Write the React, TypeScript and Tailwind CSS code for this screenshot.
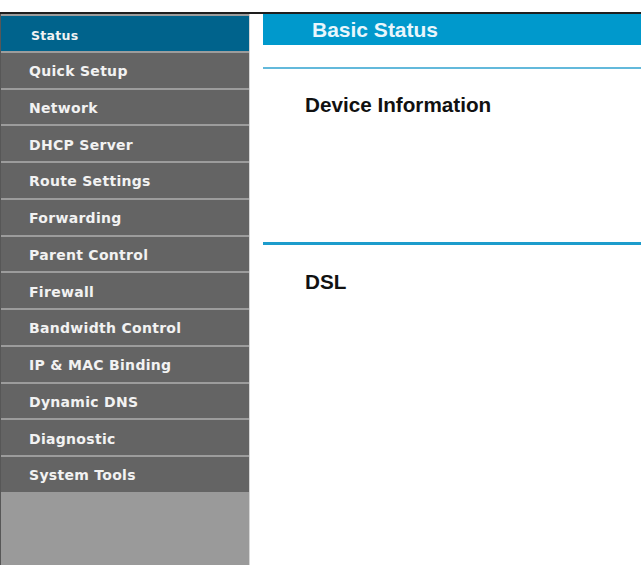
import React from "react";

const menuItems = [
  "Status",
  "Quick Setup",
  "Network",
  "DHCP Server",
  "Route Settings",
  "Forwarding",
  "Parent Control",
  "Firewall",
  "Bandwidth Control",
  "IP & MAC Binding",
  "Dynamic DNS",
  "Diagnostic",
  "System Tools",
];

export default function App() {
  const active = "Status";

  return (
    <div className="flex h-[565px] w-full flex-col overflow-hidden bg-white font-['Liberation_Sans',Arial,sans-serif]">
      {/* top edge */}
      <div className="h-[12px] bg-white" />
      <div className="h-[2px] bg-[#1e1e1e]" />

      <div className="flex min-h-0 flex-1">
        {/* side menu */}
        <nav className="flex w-[250px] flex-col border-l border-r border-l-[#575757] border-r-[#d6d6d6]">
          {menuItems.map((item) => (
            <div
              key={item}
              className={`flex h-[36.75px] items-center border-t-[2px] border-[#9c9c9c] pt-[3px] font-['DejaVu_Sans',Verdana,sans-serif] font-bold tracking-[0.3px] text-[#f2f2f2] ${
                item === active
                  ? "bg-[#00638c] pl-[30px] pt-[5px] text-[12.5px]"
                  : "bg-[#646464] pl-[28px] text-[14px]"
              }`}
            >
              {item}
            </div>
          ))}
          <div className="flex-1 bg-[#9a9a9a]" />
        </nav>

        {/* main content */}
        <main className="flex flex-1 flex-col pl-[13px]">
          <div className="flex h-[31px] items-center bg-[#0099cc] pl-[49px] text-[21px] font-bold text-[#e8f6fc]">
            Basic Status
          </div>

          <div className="mt-[22px] h-[2px] bg-[#63b9db]" />
          <h2 className="mt-[24px] pl-[42px] text-[20.7px] leading-[24px] font-bold text-[#111111]">
            Device Information
          </h2>

          <div className="mt-[125px] h-[3px] bg-[#1c9ccc]" />
          <h2 className="mt-[25px] pl-[42px] text-[20.7px] leading-[24px] font-bold text-[#111111]">
            DSL
          </h2>
        </main>
      </div>
    </div>
  );
}
